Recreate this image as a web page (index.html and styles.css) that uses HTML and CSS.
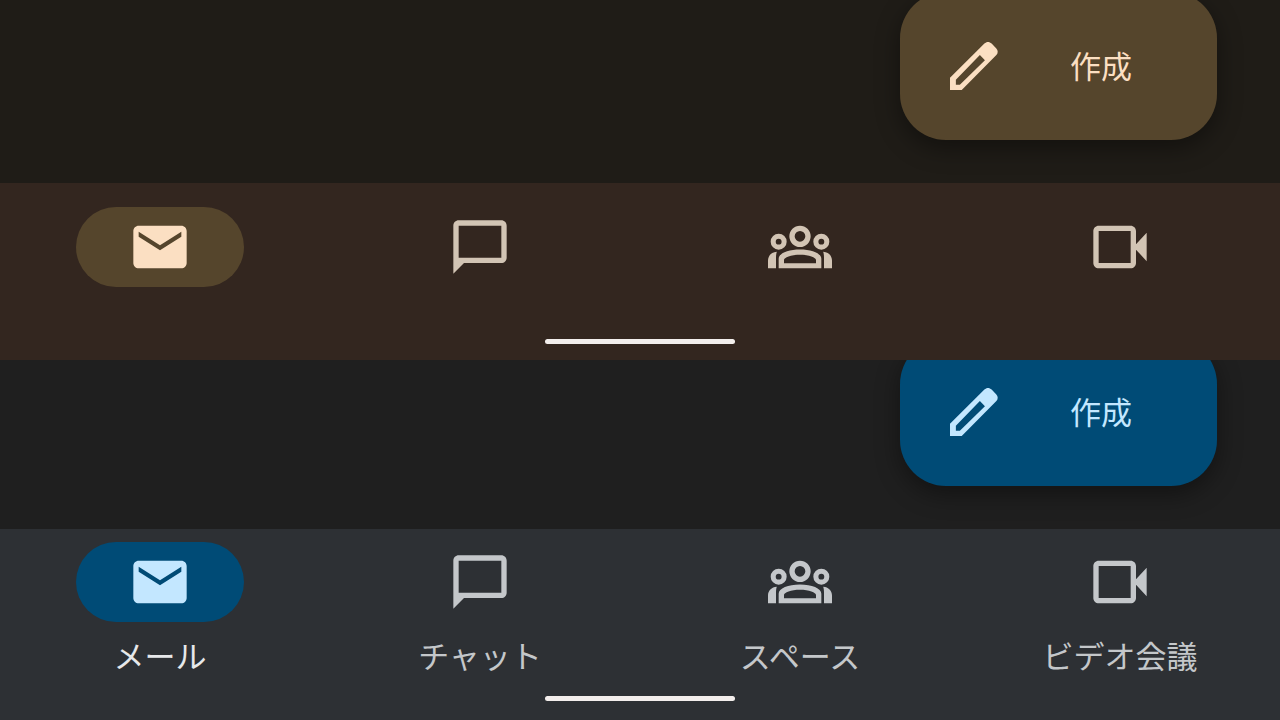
FILE: index.html
```html
<!DOCTYPE html>
<html lang="ja">
<head>
  <meta charset="UTF-8" />
  <meta name="viewport" content="width=device-width, initial-scale=1.0"/>
  <title>メール</title>
  <link rel="stylesheet" href="styles.css">
</head>
<body>
  <!-- shared icons -->
  <svg class="icon-defs" aria-hidden="true">
    <symbol id="icon-edit" viewBox="0 0 24 24">
      <path fill-rule="evenodd" d="M3 21v-4.600L15.900 3.600c.8-.8 1.900-.8 2.700 0l1.700 1.700c.8.8.8 1.900 0 2.700L7.400 21zM5.200 19h1.500l9.400-9.200-1.900-1.900-9 9.300z"/>
    </symbol>
    <symbol id="icon-mail" viewBox="0 0 24 24">
      <path d="M20 4H4c-1.100 0-2 .9-2 2v12c0 1.100.9 2 2 2h16c1.100 0 2-.9 2-2V6c0-1.100-.9-2-2-2zm0 4.200l-8 5-8-5V6.300l8 5 8-5z"/>
    </symbol>
    <symbol id="icon-chat" viewBox="0 0 24 24">
      <path fill-rule="evenodd" d="M20 2H4c-1.100 0-2 .9-2 2v18l4-4h14c1.100 0 2-.9 2-2V4c0-1.100-.9-2-2-2zM20 16H4V4h16z"/>
    </symbol>
    <symbol id="icon-spaces" viewBox="0 0 24 24">
      <path d="M0 20v-2.900c0-1.800 1.300-3.200 3.300-3.300-.2.600-.3 1.300-.3 2.200v4z"/>
      <path d="M24 20v-2.900c0-1.800-1.300-3.200-3.300-3.300.2.600.3 1.300.3 2.200v4z"/>
      <path fill-rule="evenodd" d="M4 20v-3.600C4 14.300 7.600 12.900 12 12.900s8 1.400 8 3.500V20zM6 18.100h12v-1.200c0-1-2.600-2-6-2s-6 1-6 2z"/>
      <path fill-rule="evenodd" d="M12 4a4 4 0 1 0 0 8 4 4 0 0 0 0-8zm0 2a2 2 0 1 1 0 4 2 2 0 0 1 0-4z"/>
      <path fill-rule="evenodd" d="M4 7a3 3 0 1 0 0 6 3 3 0 0 0 0-6zm0 1.900a1.100 1.100 0 1 1 0 2.200 1.100 1.100 0 0 1 0-2.200z"/>
      <path fill-rule="evenodd" d="M20 7a3 3 0 1 0 0 6 3 3 0 0 0 0-6zm0 1.900a1.100 1.100 0 1 1 0 2.200 1.100 1.100 0 0 1 0-2.200z"/>
    </symbol>
    <symbol id="icon-video" viewBox="0 0 24 24">
      <path fill-rule="evenodd" d="M4 4h12c1.100 0 2 .9 2 2v5l4-4.300v10.600L18 13v5c0 1.100-.9 2-2 2H4c-1.100 0-2-.9-2-2V6c0-1.100.9-2 2-2zM4 6v12h12V6z"/>
    </symbol>
  </svg>

  <section class="screen screen-brown">
    <main class="content">
      <button class="compose">
        <svg class="icon"><use href="#icon-edit"/></svg>
        <span>作成</span>
      </button>
    </main>
    <footer class="bottom">
      <nav class="tabs">
        <a class="tab active" href="#mail" aria-label="メール">
          <span class="pill"><svg class="icon"><use href="#icon-mail"/></svg></span>
        </a>
        <a class="tab" href="#chat" aria-label="チャット">
          <span class="pill"><svg class="icon"><use href="#icon-chat"/></svg></span>
        </a>
        <a class="tab" href="#spaces" aria-label="スペース">
          <span class="pill"><svg class="icon"><use href="#icon-spaces"/></svg></span>
        </a>
        <a class="tab" href="#meet" aria-label="ビデオ会議">
          <span class="pill"><svg class="icon"><use href="#icon-video"/></svg></span>
        </a>
      </nav>
      <div class="home-bar"></div>
    </footer>
  </section>

  <section class="screen screen-blue">
    <main class="content">
      <button class="compose">
        <svg class="icon"><use href="#icon-edit"/></svg>
        <span>作成</span>
      </button>
    </main>
    <footer class="bottom">
      <nav class="tabs">
        <a class="tab active" href="#mail">
          <span class="pill"><svg class="icon"><use href="#icon-mail"/></svg></span>
          <span class="label">メール</span>
        </a>
        <a class="tab" href="#chat">
          <span class="pill"><svg class="icon"><use href="#icon-chat"/></svg></span>
          <span class="label">チャット</span>
        </a>
        <a class="tab" href="#spaces">
          <span class="pill"><svg class="icon"><use href="#icon-spaces"/></svg></span>
          <span class="label">スペース</span>
        </a>
        <a class="tab" href="#meet">
          <span class="pill"><svg class="icon"><use href="#icon-video"/></svg></span>
          <span class="label">ビデオ会議</span>
        </a>
      </nav>
      <div class="home-bar"></div>
    </footer>
  </section>
</body>
</html>
```

FILE: styles.css
```css
* {
  box-sizing: border-box;
}

body {
  margin: 0;
  font-family: "Noto Sans CJK JP", sans-serif;
  font-size: 31px;
  line-height: 36px;
}

.icon-defs {
  display: none;
}

.icon {
  display: block;
  width: 64px;
  height: 64px;
  fill: currentColor;
}

.screen {
  display: flex;
  flex-direction: column;
  height: 50vh;
  overflow: hidden;
}

.screen-brown {
  --page: #1f1c17;
  --bar: #33261f;
  --accent: #55452c;
  --on-accent: #fbdfc2;
  --tab: #d2c4b4;
}

.screen-blue {
  --page: #1f1f1f;
  --bar: #2d3034;
  --accent: #004b76;
  --on-accent: #c3e7ff;
  --tab: #c4c7ca;
}

/* the compose button runs off the top edge */
.content {
  flex: 1;
  min-height: 0;
  display: flex;
  justify-content: flex-end;
  align-items: flex-end;
  padding: 0 63px 43px;
  background: var(--page);
  overflow: hidden;
}

.compose {
  flex-shrink: 0;
  display: flex;
  align-items: center;
  gap: 64px;
  height: 148px;
  padding: 0 85px 0 42px;
  border: none;
  border-radius: 46px;
  background: var(--accent);
  color: var(--on-accent);
  font: inherit;
  cursor: pointer;
  box-shadow: 0 8px 24px rgba(0, 0, 0, 0.4);
}

.compose span {
  padding-bottom: 2px;
}

.bottom {
  display: flex;
  flex-direction: column;
  align-items: center;
  gap: 52px;
  padding: 24px 0 16px;
  background: var(--bar);
}

.tabs {
  display: grid;
  grid-template-columns: repeat(4, 1fr);
  width: 100%;
}

.tab {
  display: flex;
  flex-direction: column;
  align-items: center;
  gap: 15px;
  color: var(--tab);
  text-decoration: none;
}

.pill {
  display: flex;
  justify-content: center;
  align-items: center;
  width: 168px;
  height: 80px;
  border-radius: 40px;
}

.active .pill {
  background: var(--accent);
  color: var(--on-accent);
}

.active .label {
  color: #e6e8ea;
}

.home-bar {
  width: 190px;
  height: 5px;
  border-radius: 3px;
  background: #f3eeec;
}

.screen-blue .bottom {
  gap: 23px;
  padding: 13px 0 19px;
}
```
